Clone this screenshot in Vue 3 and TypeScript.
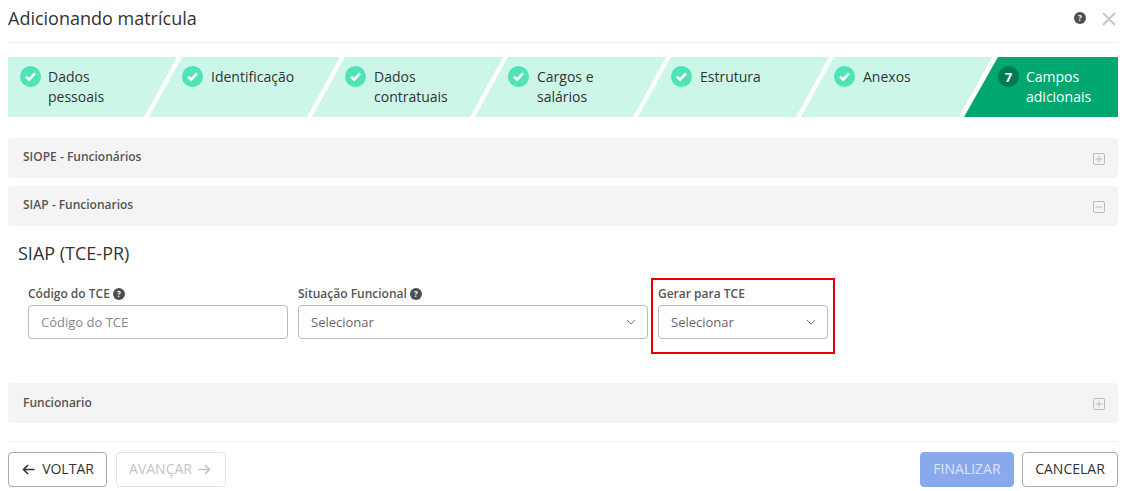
<script setup lang="ts">
const steps: { lines: string[]; w: number; pad: number }[] = [
  { lines: ['Dados', 'pessoais'], w: 169, pad: 12 },
  { lines: ['Identificação'], w: 191, pad: 33 },
  { lines: ['Dados', 'contratuais'], w: 191, pad: 33 },
  { lines: ['Cargos e', 'salários'], w: 191, pad: 33 },
  { lines: ['Estrutura'], w: 191, pad: 33 },
  { lines: ['Anexos'], w: 191, pad: 33 }
]
</script>

<template>
  <div class="modal">
    <header class="head">
      <h1 class="title">Adicionando matrícula</h1>
      <div class="head-actions">
        <span class="help help-lg">?</span>
        <svg class="close" width="14" height="14" viewBox="0 0 14 14"><path d="M1 1l12 12M13 1L1 13" stroke="#c4c4c4" stroke-width="1.8" fill="none" /></svg>
      </div>
    </header>

    <nav class="stepper">
      <div
        v-for="(s, i) in steps"
        :key="i"
        class="step"
        :class="{ first: i === 0 }"
        :style="{ width: s.w + 'px', paddingLeft: s.pad + 'px' }"
      >
        <span class="dot">
          <svg width="13" height="11" viewBox="0 0 13 11"><path d="M2 5.6l3.1 3L11 2.4" stroke="#fff" stroke-width="2.6" fill="none" /></svg>
        </span>
        <span class="step-text"><span v-for="l in s.lines" :key="l" class="line">{{ l }}</span></span>
      </div>
      <div class="step current">
        <span class="dot dark">7</span>
        <span class="step-text"><span class="line">Campos</span><span class="line">adicionais</span></span>
      </div>
    </nav>

    <section class="panel">
      <span>SIOPE - Funcionários</span>
      <svg width="12" height="12" viewBox="0 0 12 12"><rect x=".5" y=".5" width="11" height="11" rx="1.5" fill="none" stroke="#bdbdbd" /><path d="M2.5 6h7M6 2.5v7" stroke="#bdbdbd" /></svg>
    </section>
    <section class="panel second">
      <span>SIAP - Funcionarios</span>
      <svg width="12" height="12" viewBox="0 0 12 12"><rect x=".5" y=".5" width="11" height="11" rx="1.5" fill="none" stroke="#bdbdbd" /><path d="M2.5 6h7" stroke="#bdbdbd" /></svg>
    </section>

    <div class="content">
      <h2 class="sub">SIAP (TCE-PR)</h2>
      <div class="fields">
        <label class="field f1">
          <span class="label">Código do TCE <span class="help">?</span></span>
          <input class="control" placeholder="Código do TCE" />
        </label>
        <div class="field f2">
          <span class="label">Situação Funcional <span class="help">?</span></span>
          <div class="control select">
            <span>Selecionar</span>
            <svg width="10" height="6" viewBox="0 0 10 6"><path d="M1 1l4 4 4-4" stroke="#777" stroke-width="1" fill="none" /></svg>
          </div>
        </div>
        <div class="field f3">
          <span class="label">Gerar para TCE</span>
          <div class="control select">
            <span>Selecionar</span>
            <svg width="10" height="6" viewBox="0 0 10 6"><path d="M1 1l4 4 4-4" stroke="#777" stroke-width="1" fill="none" /></svg>
          </div>
          <div class="highlight"></div>
        </div>
      </div>
    </div>

    <section class="panel third">
      <span>Funcionario</span>
      <svg width="12" height="12" viewBox="0 0 12 12"><rect x=".5" y=".5" width="11" height="11" rx="1.5" fill="none" stroke="#bdbdbd" /><path d="M2.5 6h7M6 2.5v7" stroke="#bdbdbd" /></svg>
    </section>

    <footer class="foot">
      <div class="foot-group">
        <button class="btn back">
          <svg width="13" height="11" viewBox="0 0 13 11"><path d="M12.5 5.5H1.5M6 1L1.5 5.5 6 10" stroke="#333" stroke-width="1.6" fill="none" /></svg>
          <span>VOLTAR</span>
        </button>
        <button class="btn next">
          <span>AVANÇAR</span>
          <svg width="13" height="11" viewBox="0 0 13 11"><path d="M.5 5.5h11M7 1l4.5 4.5L7 10" stroke="#c4c4c4" stroke-width="1.6" fill="none" /></svg>
        </button>
      </div>
      <div class="foot-group right">
        <button class="btn finish"><span>FINALIZAR</span></button>
        <button class="btn cancel"><span>CANCELAR</span></button>
      </div>
    </footer>
  </div>
</template>

<style scoped>
.modal {
  width: 1110px;
  height: 491px;
  padding: 0 7px 0 8px;
  font-family: "Open Sans", "Liberation Sans", sans-serif;
  color: #333;
  background: #fff;
  overflow: hidden;
}
.head {
  height: 43px;
  box-sizing: border-box;
  border-bottom: 1px solid #eee;
  display: flex;
  align-items: center;
  justify-content: space-between;
  padding-bottom: 7px;
}
.title {
  margin: 0;
  font-size: 18px;
  font-weight: 400;
  line-height: 26px;
  color: #333;
}
.head-actions {
  display: flex;
  align-items: center;
  gap: 16px;
  margin-right: 2px;
}
.close {
  position: relative;
  top: 1px;
}
.help {
  display: inline-flex;
  align-items: center;
  justify-content: center;
  width: 12px;
  height: 12px;
  border-radius: 50%;
  background: #4f4f4f;
  color: #fff;
  font-size: 8px;
  font-weight: 700;
  line-height: 1;
  vertical-align: 1px;
}
.stepper {
  display: flex;
  height: 60px;
  margin-top: 14px;
}
.step {
  box-sizing: border-box;
  height: 60px;
  flex: none;
  display: flex;
  align-items: flex-start;
  gap: 8px;
  padding-top: 9px;
  margin-left: -28px;
  background: #ccf6e8;
  clip-path: polygon(33px 0, 100% 0, calc(100% - 33px) 100%, 0 100%);
  font-size: 14px;
  line-height: 20px;
  color: #333;
}
.step.first {
  margin-left: 0;
  gap: 7px;
  clip-path: polygon(0 0, 100% 0, calc(100% - 33px) 100%, 0 100%);
}
.step.current {
  width: 154px;
  padding-left: 34px;
  gap: 7px;
  background: #00a870;
  color: #fff;
  clip-path: polygon(34px 0, 100% 0, 100% 100%, 0 100%);
}
.dot {
  flex: none;
  width: 21px;
  height: 21px;
  border-radius: 50%;
  background: #50e3b8;
  display: flex;
  align-items: center;
  justify-content: center;
}
.dot.dark {
  background: #007a52;
  color: #fff;
  font-size: 13px;
  font-weight: 700;
}
.step-text {
  display: flex;
  flex-direction: column;
  padding-top: 1px;
}
.line {
  display: block;
  white-space: nowrap;
}
.panel {
  height: 40px;
  margin-top: 21px;
  padding: 0 13px 4px 15px;
  box-sizing: border-box;
  background: #f4f4f4;
  border-radius: 4px;
  display: flex;
  align-items: center;
  justify-content: space-between;
  font-size: 12px;
  font-weight: 600;
  color: #555;
}
.panel svg {
  position: relative;
  top: 3px;
}
.panel.second {
  margin-top: 8px;
}
.panel.third {
  margin-top: 0;
  padding-bottom: 2px;
}
.panel.third svg {
  top: 2px;
}
.content {
  height: 157px;
  box-sizing: border-box;
  padding: 15px 0 0 10px;
}
.sub {
  margin: 0;
  font-size: 18px;
  font-weight: 400;
  line-height: 24px;
  color: #333;
}
.fields {
  display: flex;
  gap: 10px;
  margin: 20px 0 0 10px;
}
.field {
  display: flex;
  flex-direction: column;
  gap: 3px;
  position: relative;
}
.f1 { width: 260px; }
.f2 { width: 350px; }
.f3 { width: 170px; }
.label {
  font-size: 12px;
  font-weight: 600;
  line-height: 17px;
  color: #555;
  white-space: nowrap;
}
.control {
  box-sizing: border-box;
  width: 100%;
  height: 34px;
  border: 1px solid #bbb;
  border-radius: 4px;
  padding: 0 12px;
  background: #fff;
  font-family: inherit;
  font-size: 13px;
  color: #666;
  outline: none;
}
.control::placeholder {
  color: #888;
  opacity: 1;
}
.select {
  display: flex;
  align-items: center;
  justify-content: space-between;
  padding-right: 11px;
}
.highlight {
  position: absolute;
  left: -7px;
  right: -7px;
  top: -7px;
  bottom: -15px;
  border: 2px solid #e60000;
  box-sizing: border-box;
  pointer-events: none;
}
.foot {
  margin-top: 18px;
  border-top: 1px solid #eee;
  padding-top: 10px;
  display: flex;
  justify-content: space-between;
}
.foot-group {
  display: flex;
  gap: 9px;
}
.foot-group.right {
  gap: 8px;
}
.btn {
  box-sizing: border-box;
  height: 35px;
  border-radius: 4px;
  border: 1px solid #aaa;
  background: #fff;
  font-family: inherit;
  font-size: 14px;
  color: #333;
  padding: 0 0 2px;
  display: flex;
  align-items: center;
  justify-content: center;
  gap: 6px;
}
.btn svg {
  position: relative;
  top: 1px;
}
.back { width: 99px; padding-left: 1px; gap: 7px; }
.next { width: 110px; border-color: #e4e4e4; color: #c4c4c4; padding-right: 2px; }
.finish { width: 94px; border-color: #8aa8ec; background: #8aa8ec; color: #dbe5fa; }
.cancel { width: 96px; }
</style>
<style>
body { background: #fff; }
</style>
